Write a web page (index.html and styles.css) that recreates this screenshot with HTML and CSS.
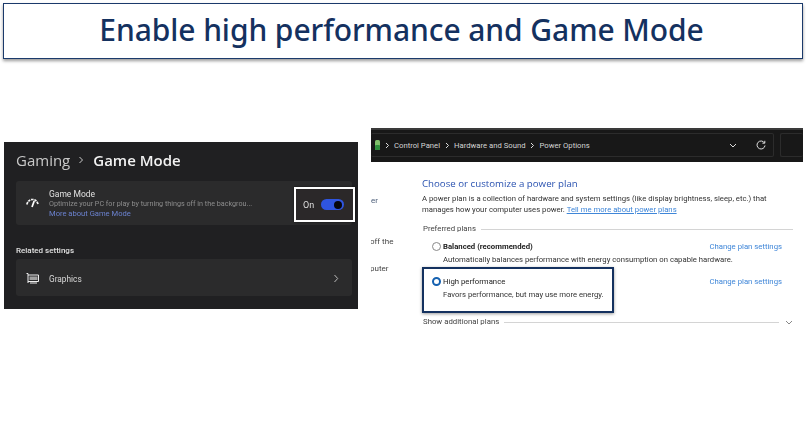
FILE: index.html
```html
<!DOCTYPE html>
<html lang="en">
<head>
<meta charset="utf-8">
<title>Enable high performance and Game Mode</title>
<link rel="stylesheet" href="styles.css">
</head>
<body>
<header class="banner"><h1 class="banner-title">Enable high performance and Game Mode</h1></header>
<main class="shots">
  <section class="gaming">
    <div class="crumb"><span class="crumb-parent">Gaming</span>
      <svg class="crumb-sep" width="6" height="8" viewBox="0 0 6 8"><path d="M1.5 1l3 3-3 3" fill="none" stroke="#ccc" stroke-width="1"/></svg>
      <span class="crumb-current">Game Mode</span></div>
    <div class="card card-mode">
      <svg class="icon-gauge" width="13" height="10" viewBox="0 0 13 10"><path d="M.8 6.500C1.800 3 4 1.500 6.500 1.500s4.700 1.500 5.700 5" fill="none" stroke="#f2f2f2" stroke-width="1.700" stroke-dasharray="2.500 .8"/><path d="M6 9L8.200 3" stroke="#fff" stroke-width="1.700"/></svg>
      <div class="mode-text">
        <div class="mode-name">Game Mode</div>
        <div class="mode-desc">Optimize your PC for play by turning things off in the backgrou...</div>
        <div class="mode-link">More about Game Mode</div>
      </div>
      <div class="toggle-box"><span class="toggle-label">On</span><span class="toggle"><span class="knob"></span></span></div>
    </div>
    <div class="related">Related settings</div>
    <div class="card card-graphics">
      <svg class="icon-gpu" width="13" height="11" viewBox="0 0 13 11"><path d="M.5 .5h1.500v9.500M2 2h10.500v6.500H2M4 10h7" fill="none" stroke="#eee" stroke-width="1"/><rect x="3.500" y="3.500" width="8" height="3.500" fill="#a0a0a0"/></svg>
      <span class="graphics-name">Graphics</span>
      <svg class="card-chevron" width="6" height="9" viewBox="0 0 6 9"><path d="M1.500 1l3.200 3.500-3.200 3.500" fill="none" stroke="#bbb" stroke-width="1"/></svg>
    </div>
  </section>
  <section class="power">
    <div class="addressbar">
      <div class="address">
        <svg class="icon-battery" width="7" height="12" viewBox="0 0 7 12"><rect x="1" y="1" width="5" height="10" rx="1.500" fill="#7fbf6a"/><rect x="1" y="6" width="5" height="5" rx="1" fill="#2f8f3c"/></svg>
        <svg class="sep" width="5" height="7" viewBox="0 0 5 7"><path d="M1 1l2.500 2.500L1 6" fill="none" stroke="#ddd"/></svg>
        <span>Control Panel</span>
        <svg class="sep" width="5" height="7" viewBox="0 0 5 7"><path d="M1 1l2.500 2.500L1 6" fill="none" stroke="#ddd"/></svg>
        <span>Hardware and Sound</span>
        <svg class="sep" width="5" height="7" viewBox="0 0 5 7"><path d="M1 1l2.500 2.500L1 6" fill="none" stroke="#ddd"/></svg>
        <span>Power Options</span>
        <svg class="addr-down" width="8" height="5" viewBox="0 0 8 5"><path d="M1 1l3 3 3-3" fill="none" stroke="#ddd"/></svg>
        <svg class="addr-refresh" width="10" height="10" viewBox="0 0 10 10"><path d="M8.500 3A4 4 0 1 0 9 5.500M8.800 .8V3.200H6.400" fill="none" stroke="#ddd"/></svg>
      </div>
      <div class="search"></div>
    </div>
    <div class="panel">
      <div class="side">
        <span class="side-a">er</span>
        <span class="side-b">off the</span>
        <span class="side-c">mputer</span>
      </div>
      <div class="content">
        <h2 class="plan-head">Choose or customize a power plan</h2>
        <p class="plan-intro">A power plan is a collection of hardware and system settings (like display brightness, sleep, etc.) that manages how your computer uses power. <a class="tell">Tell me more about power plans</a></p>
        <div class="group-head"><span>Preferred plans</span><i class="rule"></i></div>
        <div class="plan plan-balanced">
          <div class="plan-row"><span class="radio"></span><b class="plan-name">Balanced (recommended)</b><span class="plan-change">Change plan settings</span></div>
          <div class="plan-desc">Automatically balances performance with energy consumption on capable hardware.</div>
        </div>
        <div class="plan plan-high">
          <div class="plan-row"><span class="radio radio-on"></span><span class="plan-name">High performance</span><span class="plan-change">Change plan settings</span></div>
          <div class="plan-desc">Favors performance, but may use more energy.</div>
          <div class="highlight"></div>
        </div>
        <div class="group-head group-more"><span>Show additional plans</span><i class="rule"></i>
          <svg width="8" height="5" viewBox="0 0 8 5"><path d="M1 1l3 3 3-3" fill="none" stroke="#888"/></svg></div>
      </div>
    </div>
  </section>
</main>
</body>
</html>
```
FILE: styles.css
```css
* { box-sizing: border-box; }
html, body { margin: 0; padding: 0; }
body { width: 806px; height: 443px; background: #fff; overflow: hidden; font-family: Roboto, "Noto Sans", sans-serif; }

.banner { margin: 3px 3px 0 3px; height: 56px; border: 1px solid #1b3a6b; box-shadow: 0 2px 3px rgba(0,0,0,.4); display: flex; align-items: center; justify-content: center; background: #fff; padding: 0 3px 2px 0; }
.banner-title { margin: 0; font: 500 30px/1 "Noto Sans", sans-serif; color: #14315f; letter-spacing: -.08px; }

.shots { display: flex; align-items: flex-start; padding-left: 4px; }

.gaming { width: 354px; height: 167px; margin-top: 83px; background: #202022; padding: 10px 6px 0 12px; filter: blur(.35px); }
.crumb { display: flex; align-items: center; height: 16px; font-family: "Open Sans", sans-serif; font-size: 15px; line-height: 16px; }
.crumb-parent { color: #c8c8c8; }
.crumb-sep { margin: 0 9px 0 8px; }
.crumb-current { color: #f2f2f2; font-weight: 600; }

.card { background: #2b2b2c; border-radius: 3px; display: flex; align-items: center; }
.card-mode { position: relative; height: 44px; margin-top: 13px; padding-left: 10px; }
.icon-gauge { flex: none; }
.mode-text { margin: 2px 0 0 10px; line-height: 9.500px; }
.mode-name { color: #e0e0e0; font-size: 8.500px; }
.mode-desc { color: #8d8d8d; font-size: 7.200px; white-space: nowrap; }
.mode-link { color: #6b82cf; font-size: 7.600px; }
.toggle-box { position: absolute; left: 278px; top: 6px; width: 61px; height: 35px; border: 2px solid #fff; background: #2b2829; display: flex; align-items: center; padding-left: 7px; box-shadow: 0 0 2px rgba(0,0,0,.6); }
.toggle-label { color: #ddd; font-size: 9px; width: 12px; }
.toggle { margin-left: 6px; width: 23px; height: 11px; border-radius: 6px; background: #2f55e0; display: flex; align-items: center; justify-content: flex-end; padding-right: 2px; }
.knob { width: 8px; height: 8px; border-radius: 50%; background: #06060c; }

.related { margin-top: 21px; height: 10px; font-size: 8px; line-height: 10px; font-weight: 500; color: #e0e0e0; }
.card-graphics { height: 37px; margin-top: 3px; padding: 2px 13px 0 10px; }
.graphics-name { margin-left: 10px; font-size: 8.300px; color: #d8d8d8; }
.card-chevron { margin-left: auto; }

.power { width: 432px; margin: 69px 0 0 13px; filter: blur(.3px); }
.addressbar { height: 34px; background: #181818; border-top: 2px solid #3a3a3a; padding: 3px 0 0 0; display: flex; gap: 6px; align-items: flex-start; }
.address { width: 403px; height: 24px; border: 1px solid #2c2c2c; border-left: 0; border-radius: 2px; display: flex; align-items: center; padding-left: 3px; color: #d4d4d4; font-size: 7.700px; }
.address span { white-space: nowrap; }
.icon-battery { margin-right: -1px; }
.sep { margin: 0 4.500px; }
.addr-down { margin-left: auto; }
.addr-refresh { margin: 0 7px 0 19px; }
.search { flex: 1; height: 24px; border: 1px solid #2c2c2c; border-right: 0; border-radius: 2px; }

.panel { display: flex; color: #333; }
.side { width: 51px; flex: none; display: flex; flex-direction: column; font-size: 8px; color: #4a5c78; line-height: 10px; white-space: nowrap; overflow: hidden; }
.side-a { margin-top: 34px; }
.side-b { margin-top: 31px; margin-left: -1px; color: #444; }
.side-c { margin-top: 17px; margin-left: -8px; color: #444; }
.content { flex: 1; padding-top: 15px; }
.plan-head { margin: 0; font: 400 9.700px/13px "Open Sans", sans-serif; color: #2a52b0; }
.plan-intro { margin: 4px 0 0 0; width: 350px; font-size: 7.730px; line-height: 10.500px; color: #333; }
.tell { color: #3f86d8; text-decoration: underline; }
.group-head { display: flex; align-items: center; font-size: 7.800px; color: #444; margin: 9px 10px 0 1px; height: 10px; line-height: 10px; white-space: nowrap; }
.rule { flex: 1; height: 1px; background: #d4d4d4; margin-left: 5px; }
.plan { position: relative; padding-left: 10px; }
.plan-balanced { margin-top: 6px; }
.plan-high { margin-top: 10px; height: 41px; }
.plan-row { display: flex; align-items: center; height: 12px; font-size: 7.750px; color: #222; }
.plan-name { margin-left: 2px; }
.radio { width: 9px; height: 9px; border-radius: 50%; border: 1px solid #888; background: #fff; flex: none; }
.radio-on { border: 2.500px solid #1561b0; }
.plan-change { margin-left: auto; margin-right: 21px; color: #3f86d8; }
.plan-desc { margin: 3px 0 0 11px; font-size: 7.730px; line-height: 10px; color: #333; white-space: nowrap; }
.highlight { position: absolute; left: 0; top: -8px; width: 192px; height: 46px; border: 2.500px solid #14315f; box-shadow: 0 1px 3px rgba(0,0,0,.4); }
.group-more { margin-top: 1px; }
.group-more svg { margin-left: 6px; }
```
